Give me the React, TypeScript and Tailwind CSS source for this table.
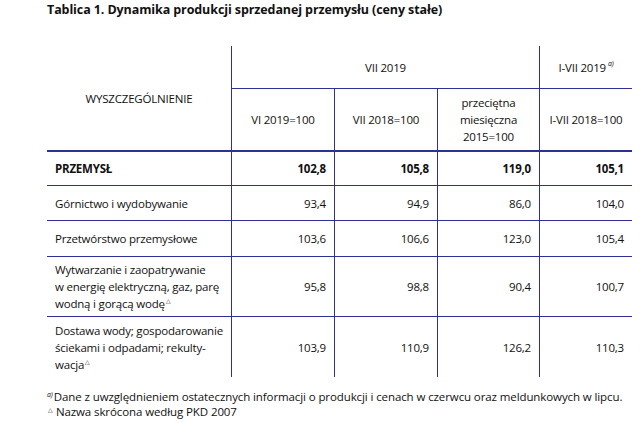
import React from "react";

const B = "border-[#2e3192]";

type Row = {
  label: React.ReactNode;
  vals: string[];
  bold?: boolean;
  h: string;
  last?: boolean;
};

const Tri = () => (
  <span className="relative -top-[5px] ml-[1px] text-[6px] leading-none">△</span>
);

const rows: Row[] = [
  { label: "PRZEMYSŁ", vals: ["102,8", "105,8", "119,0", "105,1"], bold: true, h: "h-[34px]" },
  { label: "Górnictwo i wydobywanie", vals: ["93,4", "94,9", "86,0", "104,0"], h: "h-[35px]" },
  { label: "Przetwórstwo przemysłowe", vals: ["103,6", "106,6", "123,0", "105,4"], h: "h-[36px]" },
  {
    label: (
      <>
        Wytwarzanie i zaopatrywanie
        <br />w energię elektryczną, gaz, parę
        <br />
        wodną i gorącą wodę
        <Tri />
      </>
    ),
    vals: ["95,8", "98,8", "90,4", "100,7"],
    h: "h-[60px]",
  },
  {
    label: (
      <>
        Dostawa wody; gospodarowanie
        <br />
        ściekami i odpadami; rekulty-
        <br />
        wacja
        <Tri />
      </>
    ),
    vals: ["103,9", "110,9", "126,2", "110,3"],
    h: "h-[60px]",
    last: true,
  },
];

export default function App() {
  return (
    <div
      className="w-[640px] h-[423px] bg-white text-[#111111] overflow-hidden pl-[47px] pt-[2px]"
      style={{ fontFamily: '"Open Sans", "Noto Sans", sans-serif' }}
    >
      <div className="text-[12.5px] leading-[16px] font-bold whitespace-nowrap tracking-[-0.1px]">
        Tablica 1. Dynamika produkcji sprzedanej przemysłu (ceny stałe)
      </div>

      <div className="mt-[28px] w-[585px] grid grid-cols-[184px_103px_103px_102px_93px] text-[11.5px] leading-[17px] tracking-[-0.2px]">
        {/* header row 1 */}
        <div className={`row-span-2 border-b-2 ${B} flex items-center justify-center`}>
          WYSZCZEGÓLNIENIE
        </div>
        <div className={`col-span-3 h-[43px] border-l border-b ${B} flex items-center justify-center`}>
          VII 2019
        </div>
        <div className={`h-[43px] border-l border-b ${B} flex items-center justify-center`}>
          I-VII 2019
          <span className="relative -top-[4px] ml-[2px] text-[7px] italic leading-none">a)</span>
        </div>
        {/* header row 2 */}
        <div className={`h-[63px] border-l border-b-2 ${B} flex items-center justify-center`}>
          VI 2019=100
        </div>
        <div className={`h-[63px] border-l border-b-2 ${B} flex items-center justify-center`}>
          VII 2018=100
        </div>
        <div className={`h-[63px] border-l border-b-2 ${B} flex items-center justify-center text-center`}>
          przeciętna
          <br />
          miesięczna
          <br />
          2015=100
        </div>
        <div className={`h-[63px] border-l border-b-2 ${B} flex items-center justify-center`}>
          I-VII 2018=100
        </div>

        {rows.map((r, i) => (
          <React.Fragment key={i}>
            <div
              className={`${r.h} ${r.last ? "" : "border-b"} ${B} flex items-center pl-2 whitespace-nowrap ${
                r.bold ? "font-bold" : ""
              }`}
            >
              <div>{r.label}</div>
            </div>
            {r.vals.map((v, j) => (
              <div
                key={j}
                className={`${r.h} border-l ${r.last ? "" : "border-b"} ${B} flex items-center justify-end pr-2 ${
                  r.bold ? "font-bold" : ""
                }`}
              >
                {v}
              </div>
            ))}
          </React.Fragment>
        ))}
      </div>

      <div className="mt-[13px] text-[11.5px] leading-[13px] whitespace-nowrap tracking-[-0.1px]">
        <div>
          <span className="relative -top-[4px] text-[7px] italic mr-[1px]">a)</span>
          Dane z uwzględnieniem ostatecznych informacji o produkcji i cenach w czerwcu oraz meldunkowych w lipcu.
        </div>
        <div>
          <span className="relative -top-[4px] text-[6px] mr-[3px] ml-[1px]">△</span>
          Nazwa skrócona według PKD 2007
        </div>
      </div>
    </div>
  );
}
